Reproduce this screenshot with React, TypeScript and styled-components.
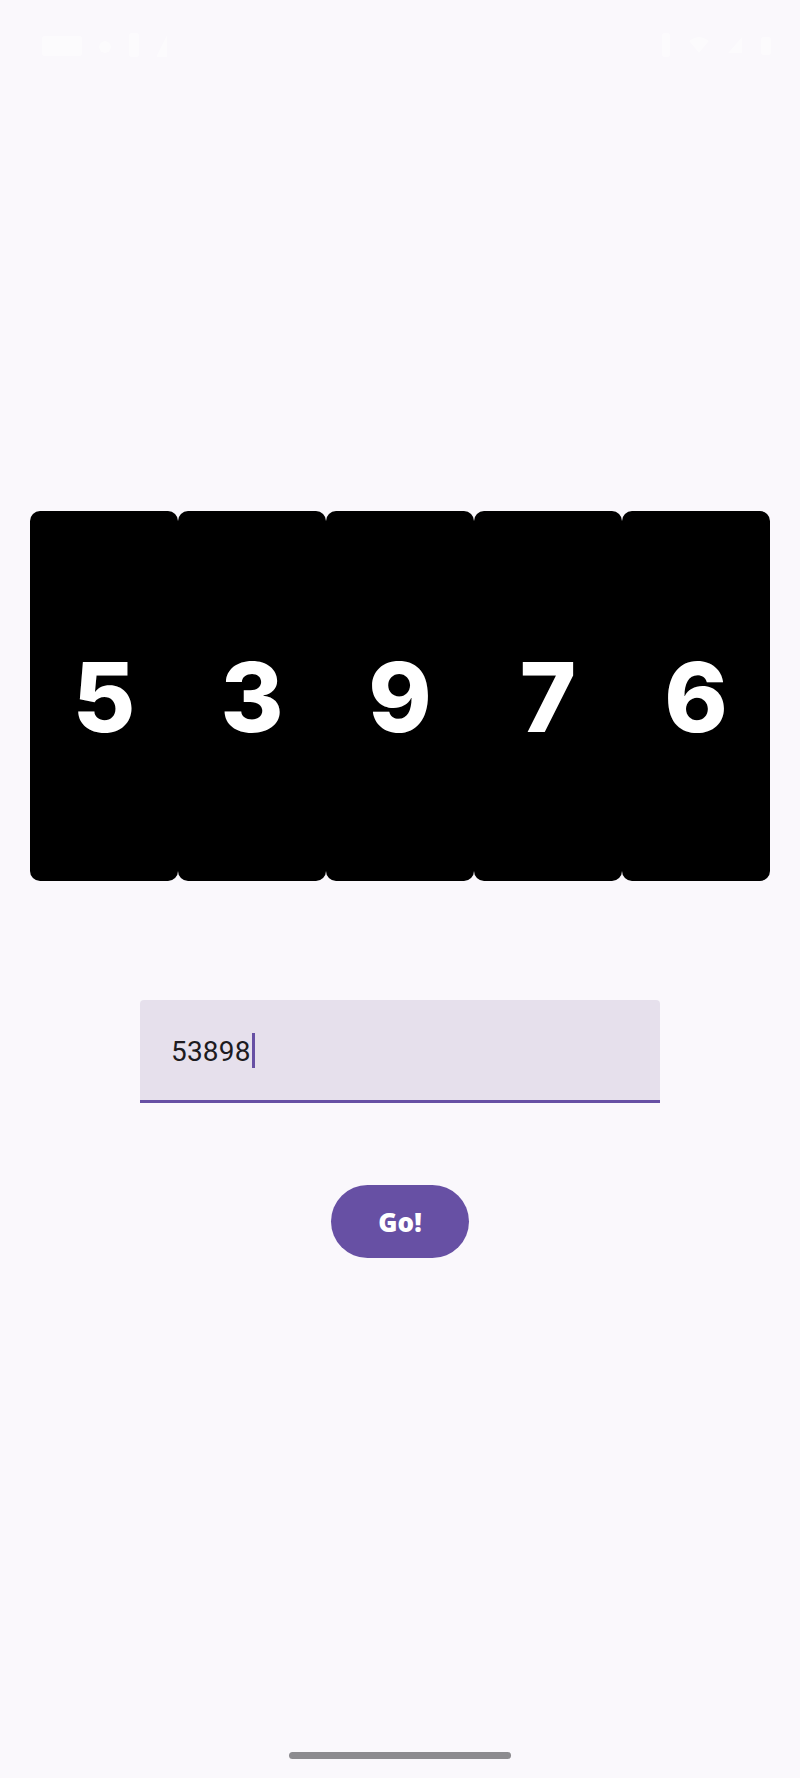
import styled, { createGlobalStyle } from "styled-components";

const GlobalStyle = createGlobalStyle`
  html, body {
    margin: 0;
    padding: 0;
    background: #faf8fc;
  }
  * { box-sizing: border-box; }
`;

const Screen = styled.div`
  width: 800px;
  height: 1778px;
  display: flex;
  flex-direction: column;
  align-items: center;
  background: #faf8fc;
  overflow: hidden;
`;

// status icons are white on the light page, so they barely show
const StatusBar = styled.div`
  width: 100%;
  height: 90px;
  display: flex;
  align-items: center;
  justify-content: space-between;
  padding: 0 28px 0 42px;
  opacity: 0.45;
`;

const StatusGroup = styled.div`
  display: flex;
  align-items: center;
  gap: 16px;
`;

const CardRow = styled.div`
  margin-top: 421px;
  display: flex;
  width: 740px;
  height: 370px;
`;

const DigitCard = styled.div`
  flex: 1;
  background: #000;
  border-radius: 10px;
  display: flex;
  align-items: center;
  justify-content: center;
  color: #fff;
  font-family: Inter, "Open Sans", sans-serif;
  font-weight: 800;
  font-size: 96px;
  line-height: 1;
  padding-top: 2px;
`;

const Field = styled.div`
  margin-top: 119px;
  width: 520px;
  height: 103px;
  background: #e6e0ec;
  border-radius: 4px 4px 0 0;
  border-bottom: 3px solid #6750a4;
  display: flex;
  align-items: center;
  padding-left: 31px;
`;

const FieldText = styled.span`
  font-family: Roboto, "Open Sans", sans-serif;
  font-size: 28px;
  color: #1d1b20;
  letter-spacing: 0.2px;
  padding-top: 2px;
`;

const Caret = styled.span`
  display: inline-block;
  width: 3px;
  height: 35px;
  margin-left: 1px;
  background: #6750a4;
`;

const GoButton = styled.button`
  margin-top: 82px;
  width: 138px;
  height: 73px;
  border: none;
  border-radius: 37px;
  background: #6750a4;
  color: #fff;
  font-family: "Open Sans", Lato, sans-serif;
  font-weight: 800;
  font-size: 26px;
  cursor: pointer;
`;

const Spacer = styled.div`
  flex: 1;
`;

const HomeBar = styled.div`
  width: 222px;
  height: 7px;
  border-radius: 4px;
  background: #8c8b8f;
  margin-bottom: 19px;
`;

const digits = [5, 3, 9, 7, 6];

export default function App() {
  return (
    <>
      <GlobalStyle />
      <Screen>
        <StatusBar>
          <StatusGroup>
            <svg width="40" height="22" viewBox="0 0 40 22">
              <rect x="0" y="2" width="40" height="20" rx="2" fill="#fff" />
            </svg>
            <svg width="14" height="20" viewBox="0 0 14 20">
              <circle cx="7" cy="12" r="6" fill="#fff" />
            </svg>
            <svg width="12" height="24" viewBox="0 0 12 24">
              <rect x="1" y="0" width="10" height="24" rx="2" fill="#fff" />
            </svg>
            <svg width="12" height="24" viewBox="0 0 12 24">
              <path d="M1 22 L11 2 L11 24 L1 24 Z" fill="#fff" />
            </svg>
          </StatusGroup>
          <StatusGroup>
            <svg width="12" height="24" viewBox="0 0 12 24">
              <rect x="2" y="0" width="8" height="24" rx="2" fill="#fff" />
            </svg>
            <svg width="22" height="20" viewBox="0 0 22 20">
              <path d="M1 6 Q11 -2 21 6 L11 18 Z" fill="#fff" />
            </svg>
            <svg width="18" height="20" viewBox="0 0 18 20">
              <path d="M2 18 L16 2 L16 18 Z" fill="#fff" />
            </svg>
            <svg width="12" height="22" viewBox="0 0 12 22">
              <rect x="1" y="3" width="10" height="18" rx="2" fill="#fff" />
            </svg>
          </StatusGroup>
        </StatusBar>

        <CardRow>
          {digits.map((d, i) => (
            <DigitCard key={i}>{d}</DigitCard>
          ))}
        </CardRow>

        <Field>
          <FieldText>53898</FieldText>
          <Caret />
        </Field>

        <GoButton>Go!</GoButton>

        <Spacer />
        <HomeBar />
      </Screen>
    </>
  );
}
